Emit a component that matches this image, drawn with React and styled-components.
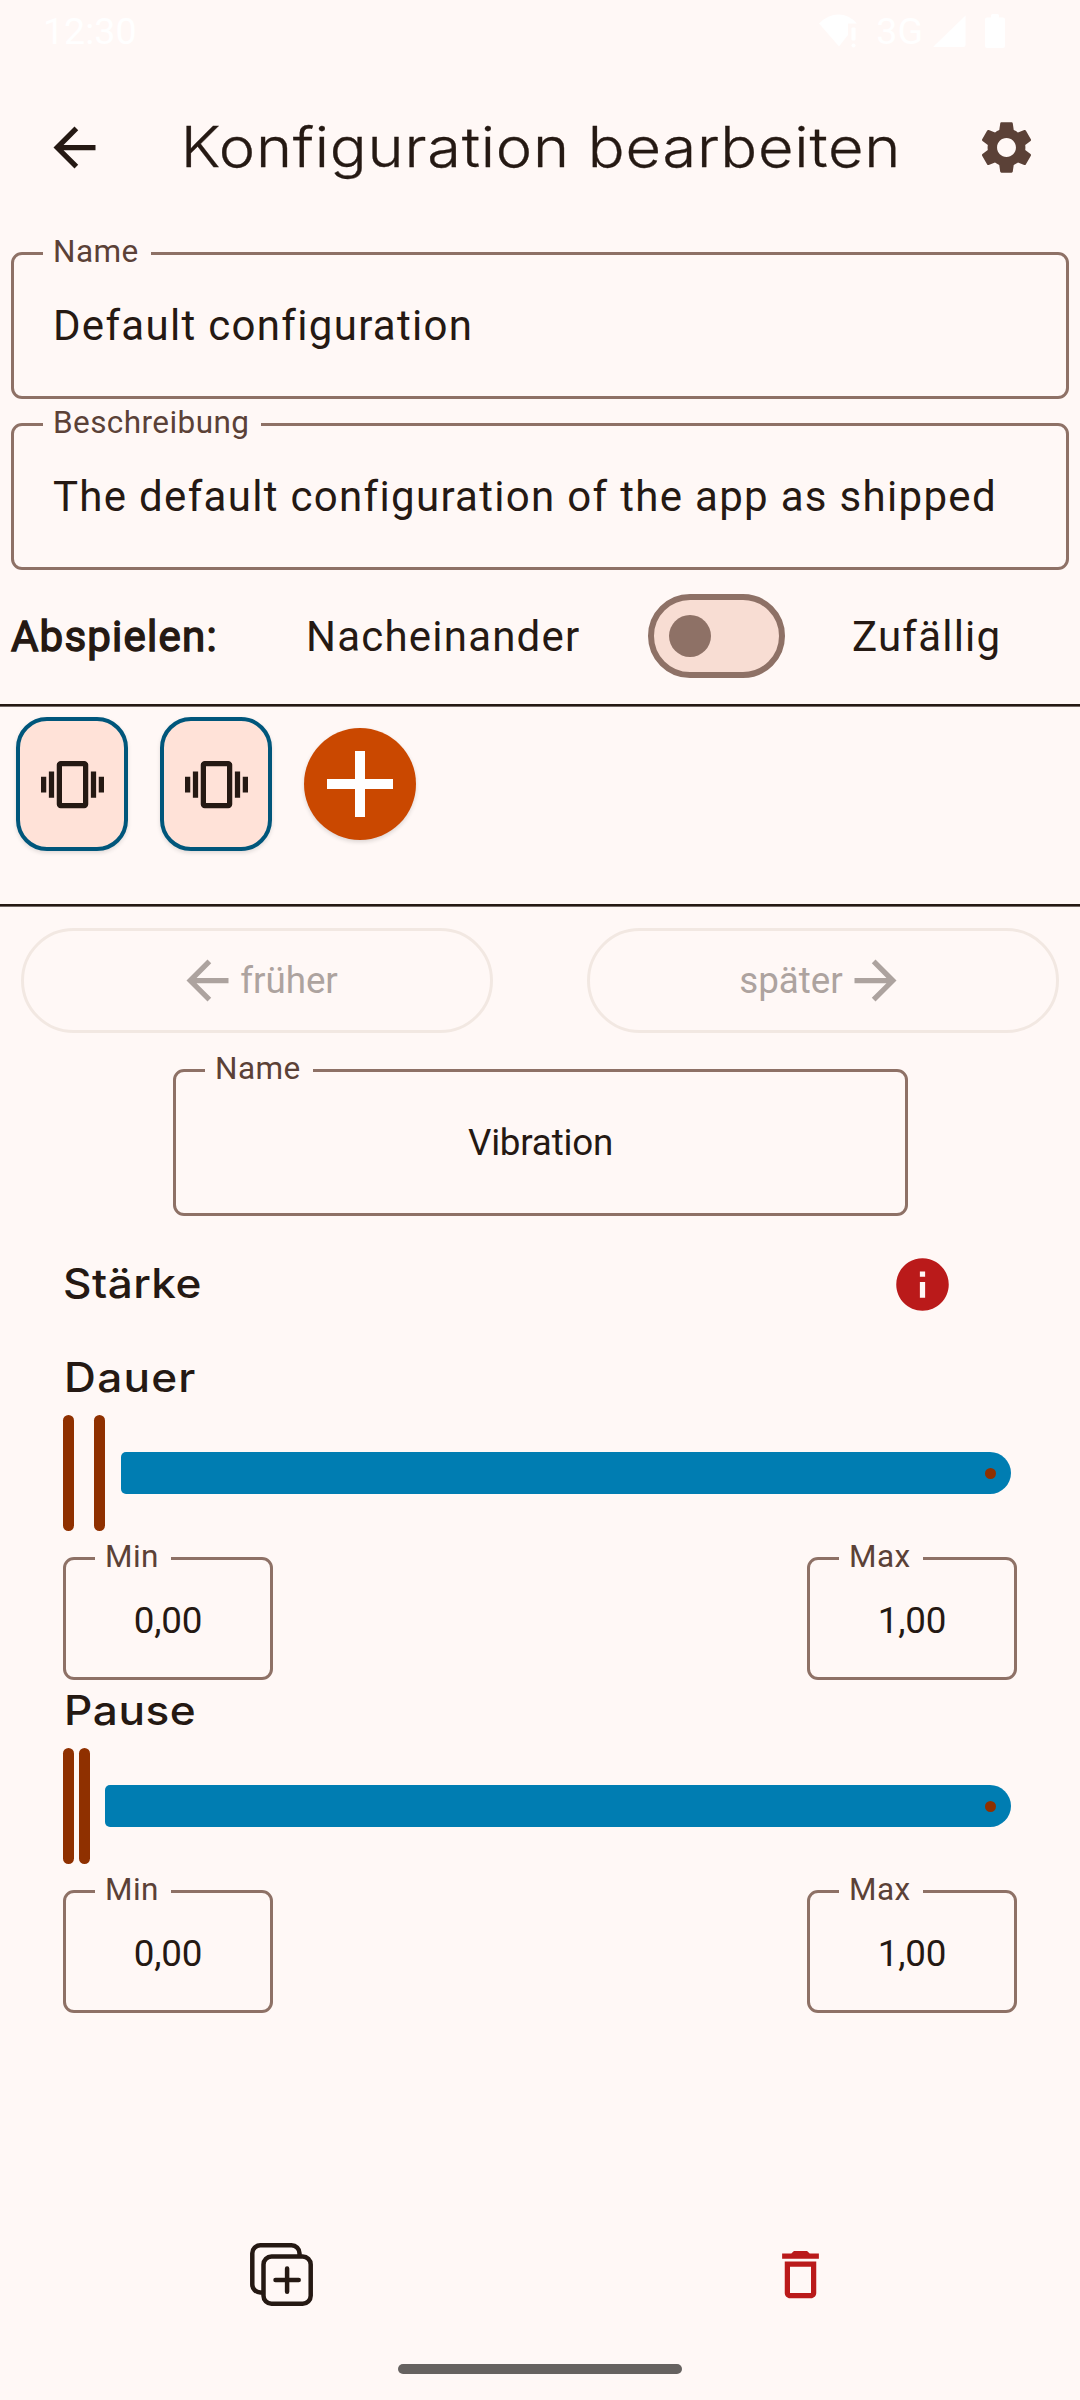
import React from "react";
import styled, { createGlobalStyle } from "styled-components";
import {
  MdArrowBack,
  MdArrowForward,
  MdSettings,
  MdVibration,
  MdInfo,
  MdDeleteOutline,
} from "react-icons/md";

const color = {
  background: "#fff8f6",
  text: "#251913",
  label: "#5b4137",
  outline: "#8e7166",
  disabledText: "#ada39f",
  disabledBorder: "#f2e8e2",
  track: "#007db2",
  thumb: "#8f3000",
  error: "#ba1a1a",
  tile: "#ffe2d8",
  tileBorder: "#00567b",
  add: "#ca4800",
  switchTrack: "#f8ddd3",
};

const GlobalStyle = createGlobalStyle`
  * { box-sizing: border-box; }
  body {
    margin: 0;
    background: ${color.background};
  }
`;

const Screen = styled.main`
  width: 1080px;
  height: 2400px;
  display: flex;
  flex-direction: column;
  background: ${color.background};
  color: ${color.text};
  font-family: Roboto, "Liberation Sans", sans-serif;
  overflow: hidden;

  svg { display: block; flex: none; }
`;

const StatusBar = styled.div`
  height: 62px;
  display: flex;
  align-items: center;
  justify-content: space-between;
  padding: 0 75px 0 43px;
  color: #fff;
  font-size: 37.6px;
  line-height: 44px;
`;

const StatusIcons = styled.div`
  display: flex;
  align-items: center;
  gap: 19px;
`;

const Network = styled.div`
  display: flex;
  align-items: center;
  gap: 10px;
`;

const Header = styled.header`
  height: 171px;
  display: flex;
  align-items: center;
  justify-content: space-between;
  padding: 0 42px 0 43px;
`;

const IconButton = styled.button`
  display: flex;
  padding: 0;
  border: 0;
  background: none;
  color: ${(p) => p.$color || color.text};
  font-size: 63px;
`;

const Title = styled.h1`
  margin: 0;
  padding-bottom: 2px;
  font-family: Inter, "Open Sans", sans-serif;
  font-weight: 300;
  font-size: 55.5px;
  line-height: 66px;
  letter-spacing: 0.7px;
  white-space: nowrap;
  transform: scaleX(1.105);
  -webkit-text-stroke: 0.3px ${color.text};
`;

const Form = styled.section`
  padding: 1px 11px 0;

  > * + * { margin-top: 6px; }
`;

const Outline = styled.fieldset`
  display: flex;
  align-items: center;
  justify-content: ${(p) => (p.$center ? "center" : "flex-start")};
  width: ${(p) => (p.$width ? `${p.$width}px` : "100%")};
  height: ${(p) => p.$height}px;
  margin-left: 0;
  margin-right: 0;
  margin-bottom: 0;
  padding: 0 39px;
  padding-bottom: ${(p) => p.$lift || 18}px;
  min-width: 0;
  border: 3px solid ${color.outline};
  border-radius: 11px;
`;

const Legend = styled.legend`
  margin-left: -10px;
  padding: 1px 12px 4px 10px;
  color: ${color.label};
  font-size: 31.5px;
  line-height: 34px;
  letter-spacing: 0.42px;
`;

const Value = styled.span`
  font-size: ${(p) => (p.$small ? 36.75 : 42)}px;
  line-height: 50px;
  letter-spacing: ${(p) => (p.$small ? -0.2 : 1.31)}px;
  white-space: nowrap;
`;

const PlayRow = styled.div`
  height: 132px;
  display: grid;
  grid-template-columns: 295px 342px 204px 1fr;
  align-items: center;
  padding-left: 11px;
  margin-bottom: 2px;
  font-size: 42px;
  line-height: 50px;
  letter-spacing: 1.22px;

  > span { padding-top: 2px; }
`;

const PlayLabel = styled.span`
  -webkit-text-stroke: 1.4px ${color.text};
`;

const Switch = styled.button`
  width: 137px;
  height: 84px;
  display: flex;
  align-items: center;
  padding: 0 0 0 15px;
  border: 6px solid ${color.outline};
  border-radius: 42px;
  background: ${color.switchTrack};
`;

const SwitchThumb = styled.span`
  width: 42px;
  height: 42px;
  border-radius: 50%;
  background: ${color.outline};
`;

const Divider = styled.div`
  height: 3px;
  background: linear-gradient(${color.text} 2px, #746a66 2px);
`;

const Timeline = styled.div`
  height: 197px;
  padding: 10px 16px 53px;
  display: flex;
  align-items: center;
  gap: 32px;
`;

const Tile = styled.button`
  width: 112px;
  height: 134px;
  display: flex;
  align-items: center;
  justify-content: center;
  padding: 0;
  border: 4px solid ${color.tileBorder};
  border-radius: 31px;
  background: ${color.tile};
  color: ${color.text};
  font-size: 63px;
  box-shadow: 0 2px 4px rgba(0, 0, 0, 0.12);
`;

const AddButton = styled.button`
  width: 112px;
  height: 112px;
  display: flex;
  align-items: center;
  justify-content: center;
  padding: 0;
  border: 0;
  border-radius: 50%;
  background: ${color.add};
  box-shadow: 0 2px 4px rgba(0, 0, 0, 0.14);
`;

const MoveRow = styled.div`
  display: grid;
  grid-template-columns: 1fr 1fr;
  gap: 94px;
  padding: 21px 21px 18px;
`;

const MoveButton = styled.button`
  height: 105px;
  display: flex;
  align-items: center;
  justify-content: center;
  gap: 1px;
  padding: 0;
  border: 3px solid ${color.disabledBorder};
  border-radius: 53px;
  background: none;
  color: ${color.disabledText};
  font-family: inherit;
  font-size: 36.75px;
  line-height: 44px;

  svg { font-size: 63px; }
`;

const NameWrap = styled.div`
  padding-left: 173px;
`;

const SectionTitle = styled.h2`
  margin: 0;
  padding-bottom: 2px;
  padding-left: ${(p) => p.$indent || 0}px;
  font-family: Inter, "Open Sans", sans-serif;
  font-weight: 450;
  font-size: 40.5px;
  line-height: 51px;
  letter-spacing: ${(p) => p.$spacing || 0}px;
  transform: scaleX(1.09);
  transform-origin: left center;
`;

const StrengthRow = styled.div`
  height: 63px;
  display: flex;
  align-items: center;
  justify-content: space-between;
  margin-top: 37px;
  padding: 0 126px 0 63px;
`;

const RangeGroup = styled.section`
  display: flex;
  flex-direction: column;
  padding: 0 63px;
  margin-top: ${(p) => p.$top}px;
`;

const Slider = styled.div`
  height: 116px;
  display: flex;
  align-items: center;
  margin: 10px 6px 8px 0;
`;

const Thumb = styled.span`
  width: 11px;
  height: 116px;
  border-radius: 6px;
  background: ${color.thumb};
  margin-right: ${(p) => p.$after}px;
`;

const Track = styled.span`
  flex: 1;
  height: 42px;
  display: flex;
  align-items: center;
  justify-content: flex-end;
  padding-right: 15.5px;
  border-radius: 5px 21px 21px 5px;
  background: ${color.track};
`;

const Stop = styled.span`
  width: 11px;
  height: 11px;
  border-radius: 50%;
  background: ${color.thumb};
`;

const Bounds = styled.div`
  display: flex;
  justify-content: space-between;
`;

const Actions = styled.footer`
  display: grid;
  grid-template-columns: 563px 474px;
  justify-items: center;
  margin-top: auto;
  margin-bottom: 58px;
`;

const GestureBar = styled.div`
  flex: none;
  width: 284px;
  height: 10px;
  margin: 0 auto 26px 398px;
  border-radius: 5px;
  background: #666260;
`;

const WifiIcon = () => (
  <svg width="38" height="34" viewBox="0 0 38 34" fill="#fff">
    <path d="M0 9.5Q9 0.5 19.5 0.5T38 9.5H29V21L20 32.5L0 9.5z" />
    <rect x="32.5" y="13.5" width="4" height="13" rx="1" />
    <rect x="32.5" y="29.5" width="4" height="4" rx="2" />
  </svg>
);

const SignalIcon = () => (
  <svg width="33" height="34" viewBox="0 0 33 34" fill="#fff">
    <path d="M32.5 1.5V31q0 2-2 2H1Q0 33 .7 32.2z" />
  </svg>
);

const BatteryIcon = () => (
  <svg width="20" height="34" viewBox="0 0 20 34" fill="#fff">
    <path d="M2 3.5H6V1.5Q6 0 7.5 0H12.5Q14 0 14 1.5V3.5H18Q20 3.5 20 5.5V32Q20 34 18 34H2Q0 34 0 32V5.5Q0 3.5 2 3.5z" />
  </svg>
);

const PlusIcon = () => (
  <svg width="66" height="66" viewBox="0 0 66 66" fill="#fff">
    <path d="M28 0H38V28H66V38H38V66H28V38H0V28H28z" />
  </svg>
);

const DuplicateIcon = () => (
  <svg
    width="63"
    height="63"
    viewBox="0 0 63 63"
    fill="none"
    stroke={color.text}
    strokeWidth="4.5"
    strokeLinecap="round"
  >
    <rect x="13.5" y="13.5" width="47.2" height="47.2" rx="8" />
    <path
      d="M49.5 12.5V10.3A8 8 0 0 0 41.5 2.3H10.3A8 8 0 0 0 2.3 10.3V41.5A8 8 0 0 0 10.3 49.5H12.5"
      strokeLinecap="butt"
    />
    <path d="M37.1 25.5V48.7M25.5 37.1H48.7" />
  </svg>
);

const Field = ({ label, value, width, height = 165, center, small, lift }) => (
  <Outline $width={width} $height={height} $center={center} $lift={lift}>
    <Legend>{label}</Legend>
    <Value $small={small}>{value}</Value>
  </Outline>
);

const Range = ({ title, spacing, gap, offset, top }) => (
  <RangeGroup $top={top}>
    <SectionTitle $spacing={spacing} $indent={1}>
      {title}
    </SectionTitle>
    <Slider>
      <Thumb $after={gap} />
      <Thumb $after={offset} />
      <Track>
        <Stop />
      </Track>
    </Slider>
    <Bounds>
      <Field label="Min" value="0,00" width={210} height={141} center small lift={13} />
      <Field label="Max" value="1,00" width={210} height={141} center small lift={13} />
    </Bounds>
  </RangeGroup>
);

export default function App() {
  return (
    <Screen>
      <GlobalStyle />
      <StatusBar>
        <span>12:30</span>
        <StatusIcons>
          <WifiIcon />
          <Network>
            <span>3G</span>
            <SignalIcon />
          </Network>
          <BatteryIcon />
        </StatusIcons>
      </StatusBar>
      <Header>
        <IconButton>
          <MdArrowBack />
        </IconButton>
        <Title>Konfiguration bearbeiten</Title>
        <IconButton $color={color.label}>
          <MdSettings />
        </IconButton>
      </Header>
      <Form>
        <Field label="Name" value="Default configuration" />
        <Field label="Beschreibung" value="The default configuration of the app as shipped" />
      </Form>
      <PlayRow>
        <PlayLabel>Abspielen:</PlayLabel>
        <span>Nacheinander</span>
        <Switch>
          <SwitchThumb />
        </Switch>
        <span>Zufällig</span>
      </PlayRow>
      <Divider />
      <Timeline>
        <Tile>
          <MdVibration />
        </Tile>
        <Tile>
          <MdVibration />
        </Tile>
        <AddButton>
          <PlusIcon />
        </AddButton>
      </Timeline>
      <Divider />
      <MoveRow>
        <MoveButton>
          <MdArrowBack />
          <span>früher</span>
        </MoveButton>
        <MoveButton>
          <span>später</span>
          <MdArrowForward />
        </MoveButton>
      </MoveRow>
      <NameWrap>
        <Field label="Name" value="Vibration" width={735} center small />
      </NameWrap>
      <StrengthRow>
        <SectionTitle $spacing={0.4}>Stärke</SectionTitle>
        <IconButton $color={color.error}>
          <MdInfo />
        </IconButton>
      </StrengthRow>
      <Range title="Dauer" spacing={1.1} gap={20} offset={16} top={36} />
      <Range title="Pause" spacing={0.5} gap={5} offset={15} top={5} />
      <Actions>
        <IconButton>
          <DuplicateIcon />
        </IconButton>
        <IconButton $color={color.error}>
          <MdDeleteOutline />
        </IconButton>
      </Actions>
      <GestureBar />
    </Screen>
  );
}
